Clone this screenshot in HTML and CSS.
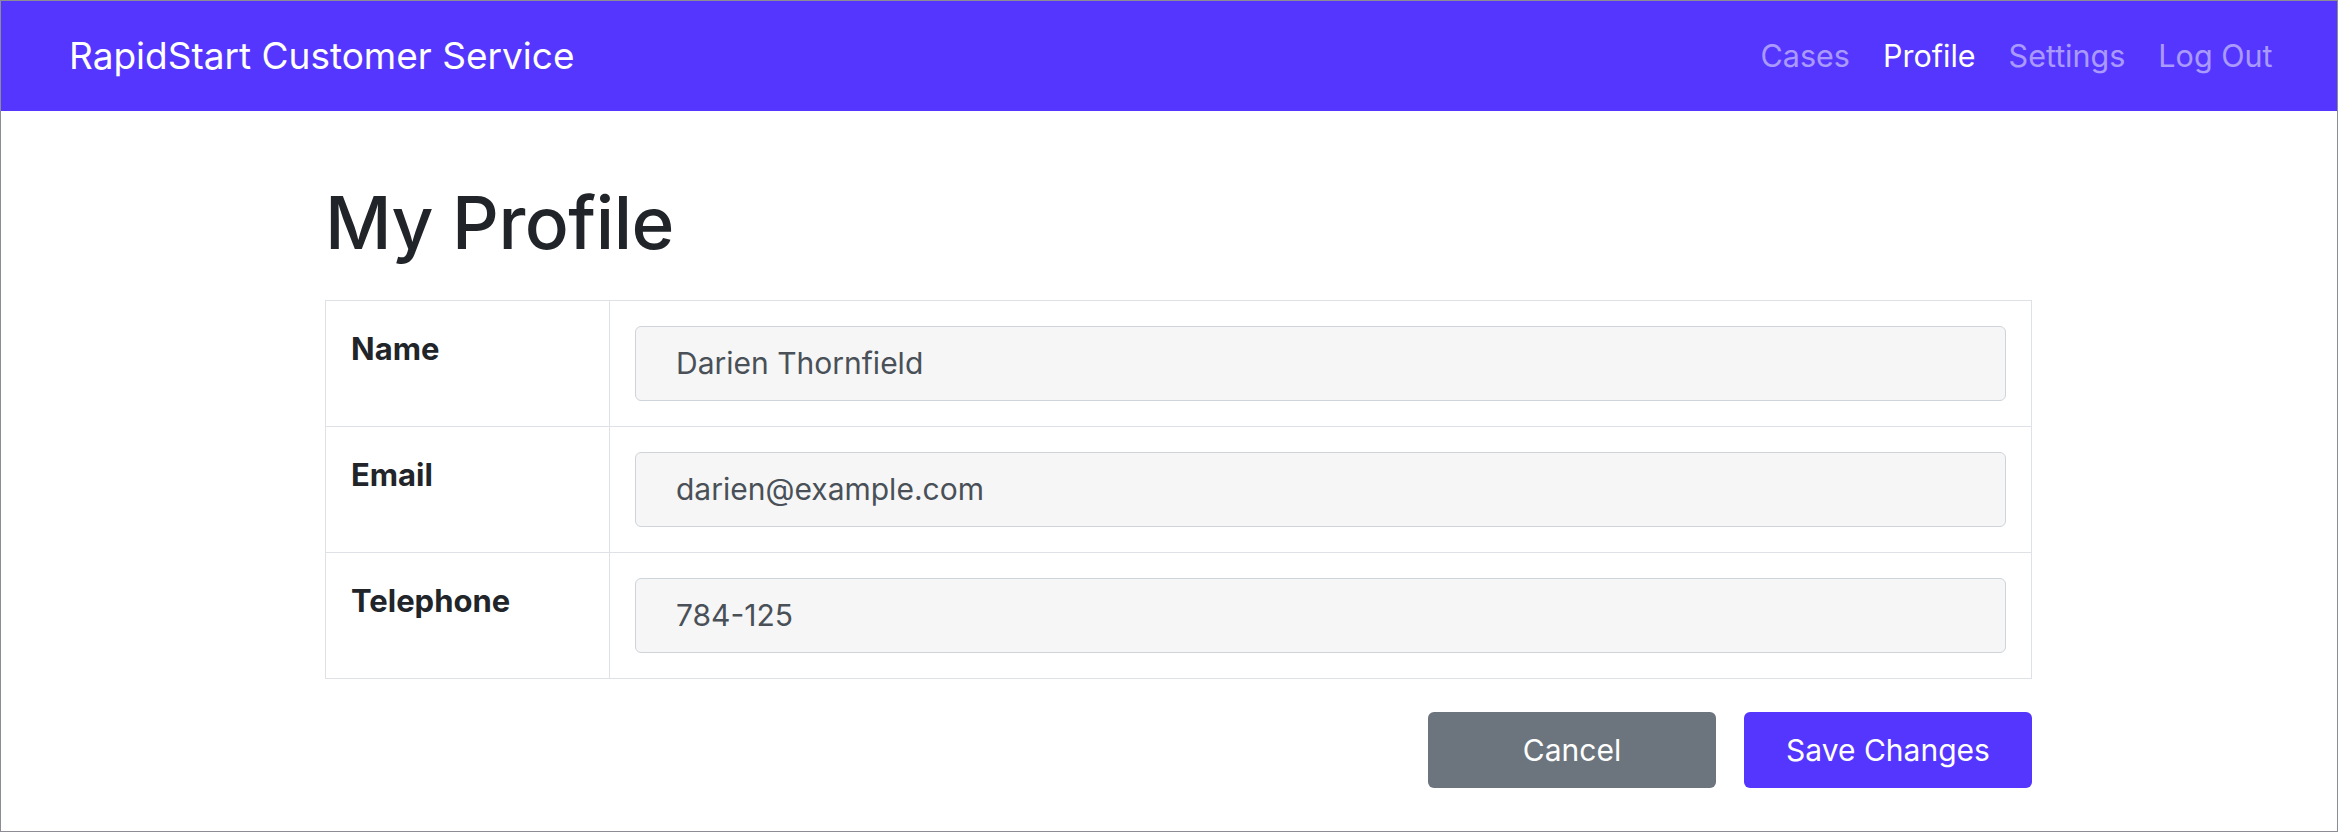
FILE: index.html
```html
<!DOCTYPE html>
<html lang="en">
<head>
<meta charset="utf-8">
<title>My Profile - RapidStart Customer Service</title>
<link rel="stylesheet" href="styles.css">
</head>
<body>
<div class="page">
  <header class="navbar">
    <a class="brand" href="#">RapidStart Customer Service</a>
    <nav class="nav">
      <a class="nav-link" href="#">Cases</a>
      <a class="nav-link active" href="#">Profile</a>
      <a class="nav-link" href="#">Settings</a>
      <a class="nav-link" href="#">Log Out</a>
    </nav>
  </header>
  <main class="container">
    <h1 class="title">My Profile</h1>
    <table class="profile-table">
      <tr>
        <th>Name</th>
        <td><input class="form-control" type="text" value="Darien Thornfield"></td>
      </tr>
      <tr>
        <th>Email</th>
        <td><input class="form-control" type="email" value="darien@example.com"></td>
      </tr>
      <tr>
        <th>Telephone</th>
        <td><input class="form-control" type="tel" value="784-125"></td>
      </tr>
    </table>
    <div class="actions">
      <button class="btn btn-secondary" type="button">Cancel</button>
      <button class="btn btn-primary" type="button">Save Changes</button>
    </div>
  </main>
</div>
</body>
</html>
```
FILE: styles.css
```css
* { box-sizing: border-box; }

html, body {
  margin: 0;
  padding: 0;
  background: #ffffff;
}

body {
  font-family: Inter, "Noto Sans", "Liberation Sans", sans-serif;
  font-size: 30px;
  line-height: 1.5;
  color: #212529;
}

.page {
  width: 2338px;
  height: 832px;
  border: 1px solid #8c8c94;
  overflow: hidden;
}

.navbar {
  height: 110px;
  background: #5536ff;
  display: flex;
  align-items: center;
  justify-content: space-between;
  padding: 0 48px 0 68px;
}

.brand {
  color: #ffffff;
  text-decoration: none;
  font-size: 37px;
  line-height: 1.5;
}

.nav {
  display: flex;
  align-items: center;
}

.nav-link {
  color: rgba(255, 255, 255, 0.5);
  text-decoration: none;
  font-size: 30.5px;
  padding: 0 16.5px;
}

.nav-link.active {
  color: #ffffff;
}

.container {
  width: 2031px;
  padding-left: 324px;
}

.title {
  margin: 68px 0 33px;
  font-size: 73px;
  font-weight: 500;
  line-height: 1.2;
  letter-spacing: -0.5px;
}

.profile-table {
  width: 1707px;
  border-collapse: collapse;
}

.profile-table th,
.profile-table td {
  border: 1px solid #dee2e6;
  padding: 25px;
  vertical-align: top;
  text-align: left;
}

.profile-table th {
  width: 284px;
  font-weight: 700;
  font-size: 31px;
  line-height: 45px;
}

.form-control {
  display: block;
  width: 100%;
  height: 75px;
  font-family: inherit;
  font-size: 30px;
  line-height: 45px;
  color: #495057;
  background: #f6f6f6;
  border: 1px solid #ced4da;
  border-radius: 6px;
  padding: 14px 40px;
}

.actions {
  display: flex;
  justify-content: flex-end;
  gap: 28px;
  margin-top: 33px;
}

.btn {
  width: 288px;
  height: 76px;
  border: none;
  border-radius: 6px;
  font-family: inherit;
  font-size: 30px;
  color: #ffffff;
  cursor: pointer;
}

.btn-secondary {
  background: #6c757d;
}

.btn-primary {
  background: #5536ff;
}
```
